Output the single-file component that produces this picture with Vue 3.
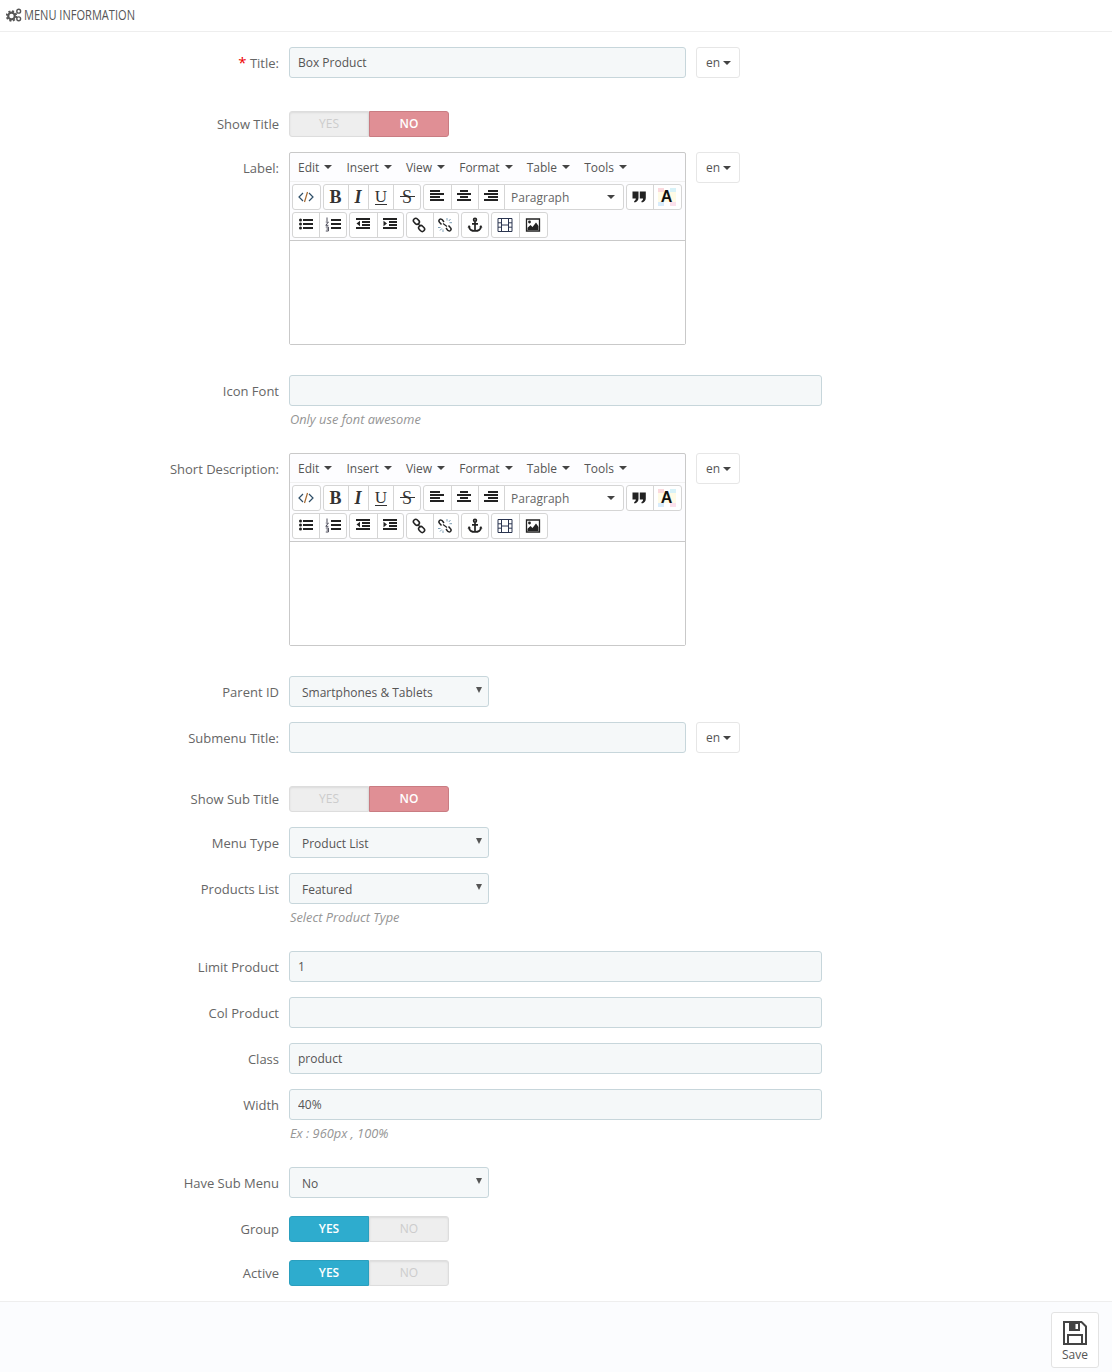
<script setup>
const menus = ['Edit', 'Insert', 'View', 'Format', 'Table', 'Tools']

const row1 = [
  { w: 29, items: [{ w: 27, i: 'code' }] },
  { w: 98, items: [
    { w: 24, t: 'B', c: 'tb' }, { w: 20, t: 'I', c: 'ti' }, { w: 25, t: 'U', c: 'tu' }, { w: 27, t: 'S', c: 'ts' }
  ] },
  { w: 201, items: [
    { w: 27, i: 'al' }, { w: 27, i: 'ac' }, { w: 26, i: 'ar' }, { w: 119, p: true }
  ] },
  { w: 56, items: [{ w: 26, i: 'quote' }, { w: 28, a: true }] }
]
const row2 = [
  { w: 55, items: [{ w: 26, i: 'ul' }, { w: 27, i: 'ol' }] },
  { w: 55, items: [{ w: 27, i: 'out' }, { w: 26, i: 'ind' }] },
  { w: 53, items: [{ w: 26, i: 'link' }, { w: 25, i: 'unlink' }] },
  { w: 28, items: [{ w: 26, i: 'anchor' }] },
  { w: 57, items: [{ w: 27, i: 'film' }, { w: 28, i: 'image' }] }
]
const toolbars = [row1, row2]
</script>

<template>
  <div class="page">
    <svg class="defs" aria-hidden="true">
      <symbol id="i-code" viewBox="0 0 16 16">
        <path d="M5 4 1 8l4 4M11 4l4 4-4 4" fill="none" stroke="#2f4f68" stroke-width="1.200" />
        <path d="M9.500 3 6.500 13" fill="none" stroke="#a5682f" stroke-width="1.200" />
      </symbol>
      <symbol id="i-al" viewBox="0 0 16 16"><path d="M1 1h10v2H1zM1 4h14v2H1zM1 7h10v2H1zM1 10h14v2H1z" fill="#222" /></symbol>
      <symbol id="i-ac" viewBox="0 0 16 16"><path d="M4 1h8v2H4zM1 4h14v2H1zM4 7h8v2H4zM1 10h14v2H1z" fill="#222" /></symbol>
      <symbol id="i-ar" viewBox="0 0 16 16"><path d="M5 1h10v2H5zM1 4h14v2H1zM5 7h10v2H5zM1 10h14v2H1z" fill="#222" /></symbol>
      <symbol id="i-quote" viewBox="0 0 16 16">
        <path d="M1.500 2.500h6v6.500C7.500 11.500 5.700 13.200 3.500 13.500L3 12C4.200 11.700 4.800 10.800 4.800 9.500H1.500zM8.800 2.500h6v6.500C14.800 11.500 13 13.200 10.800 13.500L10.300 12C11.500 11.700 12.100 10.800 12.100 9.500H8.800z" fill="#222" />
      </symbol>
      <symbol id="i-ul" viewBox="0 0 16 16">
        <path d="M5 2h10v2H5zM5 6h10v2H5zM5 10h10v2H5z" fill="#222" />
        <circle cx="2.500" cy="3" r="1.500" fill="#222" /><circle cx="2.500" cy="7" r="1.500" fill="#222" /><circle cx="2.500" cy="11" r="1.500" fill="#222" />
      </symbol>
      <symbol id="i-ol" viewBox="0 0 16 16">
        <path d="M6 2h10v2H6zM6 6h10v2H6zM6 10h10v2H6z" fill="#222" />
        <path d="M2 .500v3.500M.8 5h2.600L.8 8.300h2.600M.8 10h2.600v4H.8M1.500 12h1.900" fill="none" stroke="#334" stroke-width=".9" />
      </symbol>
      <symbol id="i-out" viewBox="0 0 16 16">
        <path d="M1 1h14v2H1zM7 4h8v2H7zM7 7h8v2H7zM1 10h14v2H1zM5 3.800v5.400L1.500 6.500z" fill="#222" />
      </symbol>
      <symbol id="i-ind" viewBox="0 0 16 16">
        <path d="M1 1h14v2H1zM7 4h8v2H7zM7 7h8v2H7zM1 10h14v2H1zM1.500 3.800v5.400L5 6.500z" fill="#222" />
      </symbol>
      <symbol id="i-link" viewBox="0 0 16 16">
        <g fill="none" stroke="#222" stroke-width="1.600">
          <rect x="2.200" y="2" width="6.400" height="4.600" rx="2.300" transform="rotate(45 5.400 4.300)" />
          <rect x="7.400" y="9.200" width="6.400" height="4.600" rx="2.300" transform="rotate(45 10.600 11.500)" />
          <path d="M7 6 9 9.500" stroke-width="1.300" />
        </g>
      </symbol>
      <symbol id="i-unlink" viewBox="0 0 16 16">
        <g fill="none" stroke="#222" stroke-width="1.400">
          <path d="M7 5 5.500 3C4.600 1.900 3.300 1.800 2.500 2.500 1.700 3.300 1.800 4.600 2.700 5.500L4.500 7.500" />
          <path d="M9 11 10.500 13C11.400 14.100 12.700 14.200 13.500 13.500 14.300 12.700 14.200 11.400 13.300 10.500L11.500 8.500" />
          <path d="M6 6.500 10 9.500" stroke-width="1.100" />
        </g>
        <path d="M10 1v2.500M11.800 4 13.500 2M12.500 5.700h2.500M1 10.500h2.500M3 13.500l1.800-2M6 12.500V15" fill="none" stroke="#6d93ad" stroke-width=".9" />
      </symbol>
      <symbol id="i-anchor" viewBox="0 0 16 16">
        <g fill="none" stroke="#222" stroke-width="1.700">
          <circle cx="8" cy="2.800" r="1.400" />
          <path d="M8 4.500v9.500M5 6.800h6" />
          <path d="M2 10C2.500 12.500 5 14 8 14s5.500-1.500 6-4" />
        </g>
        <path d="M.5 10.500 2 8l2 2.300zM15.500 10.500 14 8l-2 2.300z" fill="#222" />
      </symbol>
      <symbol id="i-film" viewBox="0 0 16 16">
        <path d="M1 1.500h14v13H1zM4.500 1.500v13M11.500 1.500v13M1 5.800h3.500M1 10.200h3.500M11.500 5.800H15M11.500 10.200H15M4.500 8h7" fill="none" stroke="#2b3550" stroke-width="1" />
      </symbol>
      <symbol id="i-image" viewBox="0 0 16 16">
        <path d="M1.500 2h13v12h-13z" fill="none" stroke="#222" stroke-width="1.300" />
        <path d="M2.500 13V10.800l3-2.800 2 2 3.500-4.500 2.500 3.500V13z" fill="#222" />
        <circle cx="4.500" cy="5" r="1.400" fill="#222" />
      </symbol>
    </svg>

    <header class="head">
      <svg class="cogs" viewBox="0 0 16 14" aria-hidden="true">
        <circle cx="5.500" cy="8" r="3.300" fill="none" stroke="#555" stroke-width="2.200" />
        <circle cx="5.500" cy="8" r="4.800" fill="none" stroke="#555" stroke-width="1.800" stroke-dasharray="2 1.770" />
        <circle cx="12.700" cy="3.200" r="1.900" fill="none" stroke="#555" stroke-width="1.400" />
        <circle cx="12.700" cy="10.800" r="1.900" fill="none" stroke="#555" stroke-width="1.400" />
      </svg>
      <span class="head-text">MENU INFORMATION</span>
    </header>

    <form class="form" @submit.prevent>
      <div class="row mb33">
        <label class="lab"><span class="req">*</span> Title:</label>
        <div class="inline">
          <input class="inp short" value="Box Product" readonly />
          <button type="button" class="lang">en<i class="caret" /></button>
        </div>
      </div>

      <div class="row">
        <label class="lab sw-lab">Show Title</label>
        <div class="switch"><span class="off">YES</span><span class="no">NO</span></div>
      </div>

      <div class="row mb30">
        <label class="lab">Label:</label>
        <div class="inline">
          <div class="editor">
            <div class="menubar">
              <span v-for="m in menus" :key="m" class="mi">{{ m }}<i class="caret" /></span>
            </div>
            <div class="toolbar">
              <div v-for="(tb, ti) in toolbars" :key="ti" class="tb-row">
                <div v-for="(g, gi) in tb" :key="gi" class="grp" :style="{ width: g.w + 'px' }">
                  <span v-for="(b, bi) in g.items" :key="bi" class="btn" :class="[b.c, { para: b.p }]" :style="{ width: b.w + 'px' }">
                    <svg v-if="b.i" class="ico" :class="'ico-' + b.i"><use :href="'#i-' + b.i" /></svg>
                    <template v-else-if="b.t">{{ b.t }}</template>
                    <template v-else-if="b.p">Paragraph<i class="caret" /></template>
                    <span v-else class="colA">A</span>
                  </span>
                </div>
              </div>
            </div>
            <div class="area"></div>
          </div>
          <button type="button" class="lang">en<i class="caret" /></button>
        </div>
      </div>

      <div class="row mb24">
        <label class="lab">Icon Font</label>
        <div>
          <input class="inp long" readonly />
          <p class="help">Only use font awesome</p>
        </div>
      </div>

      <div class="row mb30">
        <label class="lab">Short Description:</label>
        <div class="inline">
          <div class="editor">
            <div class="menubar">
              <span v-for="m in menus" :key="m" class="mi">{{ m }}<i class="caret" /></span>
            </div>
            <div class="toolbar">
              <div v-for="(tb, ti) in toolbars" :key="ti" class="tb-row">
                <div v-for="(g, gi) in tb" :key="gi" class="grp" :style="{ width: g.w + 'px' }">
                  <span v-for="(b, bi) in g.items" :key="bi" class="btn" :class="[b.c, { para: b.p }]" :style="{ width: b.w + 'px' }">
                    <svg v-if="b.i" class="ico" :class="'ico-' + b.i"><use :href="'#i-' + b.i" /></svg>
                    <template v-else-if="b.t">{{ b.t }}</template>
                    <template v-else-if="b.p">Paragraph<i class="caret" /></template>
                    <span v-else class="colA">A</span>
                  </span>
                </div>
              </div>
            </div>
            <div class="area"></div>
          </div>
          <button type="button" class="lang">en<i class="caret" /></button>
        </div>
      </div>

      <div class="row">
        <label class="lab">Parent ID</label>
        <div class="sel">Smartphones &amp; Tablets</div>
      </div>

      <div class="row mb33">
        <label class="lab">Submenu Title:</label>
        <div class="inline">
          <input class="inp short" readonly />
          <button type="button" class="lang">en<i class="caret" /></button>
        </div>
      </div>

      <div class="row">
        <label class="lab sw-lab">Show Sub Title</label>
        <div class="switch"><span class="off">YES</span><span class="no">NO</span></div>
      </div>

      <div class="row">
        <label class="lab">Menu Type</label>
        <div class="sel">Product List</div>
      </div>

      <div class="row mb24">
        <label class="lab">Products List</label>
        <div>
          <div class="sel">Featured</div>
          <p class="help">Select Product Type</p>
        </div>
      </div>

      <div class="row">
        <label class="lab">Limit Product</label>
        <input class="inp long" value="1" readonly />
      </div>
      <div class="row">
        <label class="lab">Col Product</label>
        <input class="inp long" readonly />
      </div>
      <div class="row">
        <label class="lab">Class</label>
        <input class="inp long" value="product" readonly />
      </div>
      <div class="row mb24">
        <label class="lab">Width</label>
        <div>
          <input class="inp long" value="40%" readonly />
          <p class="help">Ex : 960px , 100%</p>
        </div>
      </div>

      <div class="row mb18">
        <label class="lab">Have Sub Menu</label>
        <div class="sel">No</div>
      </div>
      <div class="row mb18">
        <label class="lab sw-lab">Group</label>
        <div class="switch"><span class="yes">YES</span><span class="off">NO</span></div>
      </div>
      <div class="row">
        <label class="lab sw-lab">Active</label>
        <div class="switch"><span class="yes">YES</span><span class="off">NO</span></div>
      </div>
    </form>

    <footer class="foot">
      <button type="button" class="save">
        <svg class="save-ico" viewBox="0 0 24 24" aria-hidden="true">
          <path d="M1 1h17.500L23 5.500V23H1z" fill="none" stroke="#444" stroke-width="2" />
          <path d="M6 1.500h11V10H6z" fill="#444" />
          <path d="M12.500 3h2.500v5h-2.500z" fill="#fff" />
          <path d="M5 22.500V14h14v8.500" fill="none" stroke="#444" stroke-width="2" />
        </svg>
        <span>Save</span>
      </button>
    </footer>
  </div>
</template>

<style scoped>
.page {
  font-family: "Open Sans", sans-serif;
  font-size: 13px;
  color: #555;
  height: 1372px;
  overflow: hidden;
  display: flex;
  flex-direction: column;
  background: #fff;
}
.defs { position: absolute; width: 0; height: 0; }
.head {
  box-sizing: border-box;
  height: 32px;
  border-bottom: 1px solid #eee;
  display: flex;
  align-items: center;
  padding: 0 0 1px 6px;
  margin-bottom: 15px;
  flex: none;
}
.cogs { width: 16px; height: 14px; margin-right: 2px; flex: none; }
.head-text {
  font-size: 14px;
  color: #555;
  white-space: nowrap;
  display: inline-block;
  margin-bottom: 2px;
  transform: scaleX(.79);
  transform-origin: left center;
}
.form { flex: none; }
.row {
  display: grid;
  grid-template-columns: 279px auto;
  column-gap: 10px;
  justify-content: start;
  align-items: start;
  margin-bottom: 15px;
}
.mb33 { margin-bottom: 33px; }
.mb30 { margin-bottom: 30px; }
.mb24 { margin-bottom: 25px; }
.mb18 { margin-bottom: 18px; }
.lab {
  text-align: right;
  padding-top: 2px;
  line-height: 29px;
  color: #666;
  white-space: nowrap;
}
.sw-lab { padding-top: 0; line-height: 26px; }
.req { color: #e00; font-size: 15px; line-height: 0; }
.inline { display: flex; gap: 10px; align-items: flex-start; }
.inp {
  display: block;
  box-sizing: border-box;
  height: 31px;
  padding: 0 8px;
  font: inherit;
  font-size: 12px;
  color: #555;
  background: #f5f8f9;
  border: 1px solid #c7d6db;
  border-radius: 3px;
  outline: none;
}
.short { width: 397px; }
.long { width: 533px; }
.sel {
  position: relative;
  box-sizing: border-box;
  width: 200px;
  height: 31px;
  line-height: 31px;
  padding-left: 12px;
  font-size: 12px;
  background: #f5f8f9;
  border: 1px solid #c7d6db;
  border-radius: 3px;
}
.sel::after {
  content: "";
  position: absolute;
  right: 6px;
  top: 10px;
  border-left: 3px solid transparent;
  border-right: 3px solid transparent;
  border-top: 6px solid #555;
}
.help {
  margin: 4px 0 0 1px;
  font-style: italic;
  font-size: 12.800px;
  line-height: 18px;
  color: #959595;
}
.lang {
  box-sizing: border-box;
  width: 44px;
  height: 31px;
  padding: 0 0 0 9px;
  display: flex;
  align-items: center;
  font: inherit;
  font-size: 12px;
  color: #555;
  background: #fff;
  border: 1px solid #e6e6e6;
  border-radius: 3px;
}
.caret {
  display: inline-block;
  width: 0;
  height: 0;
  margin-left: 3px;
  border-left: 4px solid transparent;
  border-right: 4px solid transparent;
  border-top: 4px solid #444;
}
.switch {
  display: flex;
  width: 160px;
  height: 26px;
  box-sizing: border-box;
  font-size: 12px;
  line-height: 24px;
  text-align: center;
}
.switch span { width: 80px; box-sizing: border-box; border: 1px solid; }
.off {
  background: #eee;
  border-color: #ddd !important;
  color: #ccc;
  box-shadow: inset 0 1px 2px rgba(0, 0, 0, .08);
}
.switch .off:first-child { border-radius: 3px 0 0 3px; }
.switch .off:last-child { border-radius: 0 3px 3px 0; }
.no {
  background: #e08f95;
  border-color: #c97c82 !important;
  color: #fff;
  font-weight: 600;
  border-radius: 0 3px 3px 0;
}
.yes {
  background: #2eacce;
  border-color: #2a9fbe !important;
  color: #fff;
  font-weight: 600;
  border-radius: 3px 0 0 3px;
}
.editor {
  box-sizing: border-box;
  width: 397px;
  height: 193px;
  border: 1px solid #c9c9c9;
  border-radius: 2px;
  display: flex;
  flex-direction: column;
  background: #fdfdff;
}
.menubar {
  height: 29px;
  box-sizing: border-box;
  border-bottom: 1px solid #f1f1f1;
  display: flex;
  align-items: center;
  gap: 14.100px;
  padding-left: 8px;
  font-size: 12px;
  color: #555;
  flex: none;
}
.mi { display: inline-flex; align-items: center; }
.mi .caret { margin-left: 5px; }
.toolbar {
  padding: 2px 0 2px 2px;
  display: flex;
  flex-direction: column;
  gap: 2px;
  border-bottom: 1px solid #c9c9c9;
  flex: none;
}
.tb-row { display: flex; gap: 2px; height: 26px; }
.grp {
  box-sizing: border-box;
  display: flex;
  border: 1px solid #d5d5d5;
  border-radius: 3px;
  background: #fff;
  flex: none;
}
.btn {
  position: relative;
  box-sizing: border-box;
  height: 24px;
  display: flex;
  align-items: center;
  justify-content: center;
  flex: none;
  border-left: 1px solid #d5d5d5;
  font-family: "Liberation Serif", serif;
  font-size: 18px;
  color: #333;
}
.btn:first-child { border-left: 0; }
.tb { font-weight: 700; padding-right: 1px; }
.ti { font-style: italic; font-weight: 700; padding-right: 1px; }
.tu { font-weight: 400; font-size: 17px; }
.tu::after {
  content: "";
  position: absolute;
  left: 6px;
  right: 6px;
  bottom: 4px;
  height: 1px;
  background: #333;
}
.ts { font-size: 18px; font-weight: 400; }
.ts::after {
  content: "";
  position: absolute;
  left: 6px;
  right: 5px;
  top: 11px;
  height: 1px;
  background: #333;
}
.ico { width: 16px; height: 16px; margin-right: 2px; }
.ico-ul, .ico-ol, .ico-anchor { margin-right: 0; }
.para {
  justify-content: space-between;
  padding: 0 8px 0 6px;
  font-family: "Open Sans", sans-serif;
  font-size: 12px;
  color: #666;
}
.para .caret { margin-left: 0; }
.colA {
  width: 18px;
  height: 18px;
  margin-right: 2px;
  text-align: center;
  line-height: 18px;
  font-family: "Liberation Sans", sans-serif;
  font-size: 16px;
  font-weight: 700;
  color: #111;
  background:
    linear-gradient(90deg, #fbd9dd 0 33%, #fff 33% 66%, #d8f2f8 66%) top / 100% 4px no-repeat,
    linear-gradient(90deg, #d8ecfb 0 33%, #fff 33% 66%, #fce0ec 66%) bottom / 100% 4px no-repeat,
    #fffbe6;
}
.area { flex: 1; background: #fff; }
.foot {
  flex: 1;
  background: #fbfcfe;
  border-top: 1px solid #eee;
  padding: 10px 13px 0 0;
  display: flex;
  justify-content: flex-end;
  align-items: flex-start;
}
.save {
  box-sizing: border-box;
  width: 48px;
  height: 56px;
  padding: 8px 0 0;
  border: 1px solid #e3e3e3;
  border-radius: 3px;
  background: #fff;
  font: inherit;
  font-size: 12px;
  color: #555;
  display: flex;
  flex-direction: column;
  align-items: center;
}
.save-ico { width: 24px; height: 24px; margin-bottom: 1px; }
</style>
